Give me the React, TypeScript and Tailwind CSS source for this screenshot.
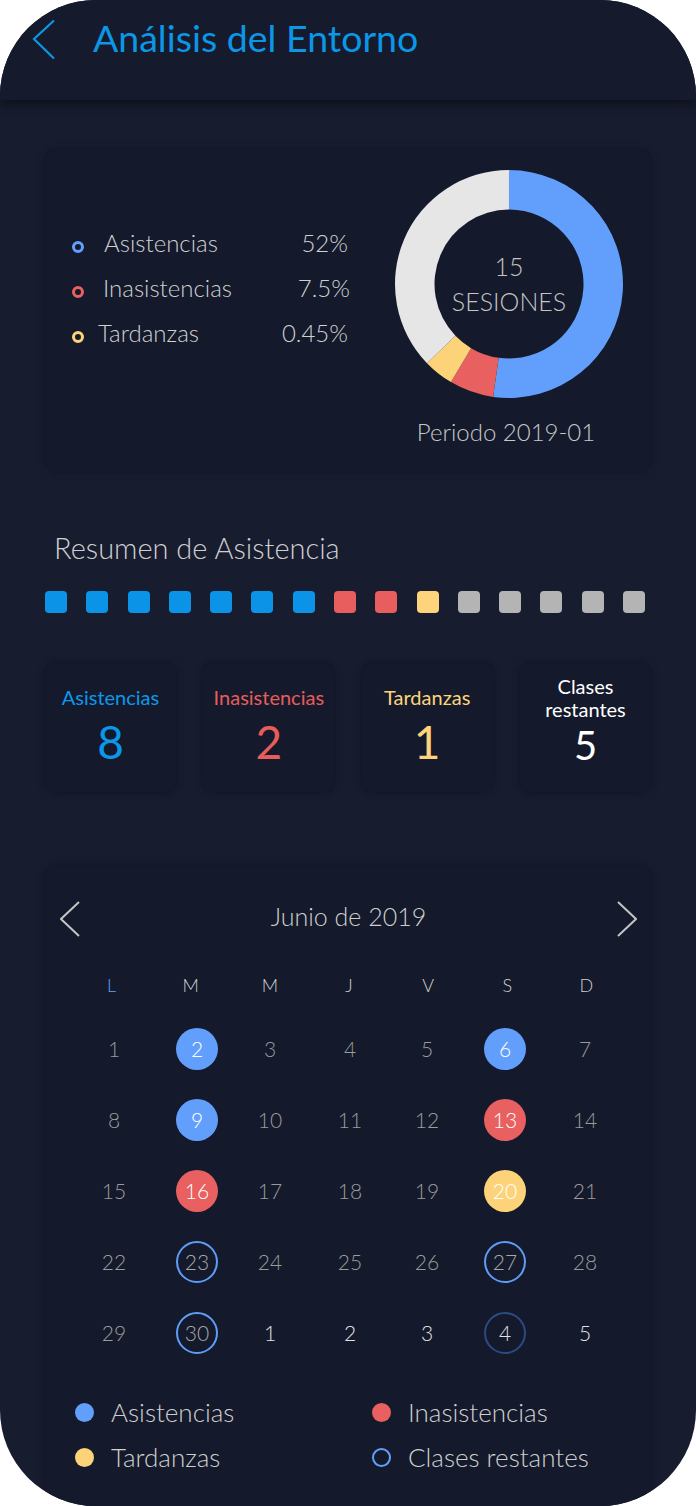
import React from "react";

const FONT = "font-['Lato','Liberation_Sans',sans-serif]";

function arc(cx: number, cy: number, ro: number, ri: number, a0: number, a1: number) {
  const rad = (a: number) => ((a - 90) * Math.PI) / 180;
  const p = (r: number, a: number) => [cx + r * Math.cos(rad(a)), cy + r * Math.sin(rad(a))];
  const large = a1 - a0 > 180 ? 1 : 0;
  const [x0, y0] = p(ro, a0);
  const [x1, y1] = p(ro, a1);
  const [x2, y2] = p(ri, a1);
  const [x3, y3] = p(ri, a0);
  return `M${x0} ${y0} A${ro} ${ro} 0 ${large} 1 ${x1} ${y1} L${x2} ${y2} A${ri} ${ri} 0 ${large} 0 ${x3} ${y3}Z`;
}

const segments = [
  { a0: 0, a1: 188, c: "#629ffc" },
  { a0: 188, a1: 210.6, c: "#e86060" },
  { a0: 210.6, a1: 226, c: "#fdd37a" },
  { a0: 226, a1: 359.99, c: "#e6e6e6" },
];

const squares = [
  "bg-[#0b93e8]", "bg-[#0b93e8]", "bg-[#0b93e8]", "bg-[#0b93e8]", "bg-[#0b93e8]", "bg-[#0b93e8]", "bg-[#0b93e8]",
  "bg-[#e85d5d]", "bg-[#e85d5d]", "bg-[#fdd47c]",
  "bg-[#b4b4b4]", "bg-[#b4b4b4]", "bg-[#b4b4b4]", "bg-[#b4b4b4]", "bg-[#b4b4b4]",
];

type Day = { n: number; k?: "blue" | "red" | "yellow" | "ring" | "dim"; next?: boolean };

const weeks: Day[][] = [
  [{ n: 1 }, { n: 2, k: "blue" }, { n: 3 }, { n: 4 }, { n: 5 }, { n: 6, k: "blue" }, { n: 7 }],
  [{ n: 8 }, { n: 9, k: "blue" }, { n: 10 }, { n: 11 }, { n: 12 }, { n: 13, k: "red" }, { n: 14 }],
  [{ n: 15 }, { n: 16, k: "red" }, { n: 17 }, { n: 18 }, { n: 19 }, { n: 20, k: "yellow" }, { n: 21 }],
  [{ n: 22 }, { n: 23, k: "ring" }, { n: 24 }, { n: 25 }, { n: 26 }, { n: 27, k: "ring" }, { n: 28 }],
  [
    { n: 29 },
    { n: 30, k: "ring" },
    { n: 1, next: true },
    { n: 2, next: true },
    { n: 3, next: true },
    { n: 4, k: "dim", next: true },
    { n: 5, next: true },
  ],
];

function DayCell({ d }: { d: Day }) {
  let cls = "text-[#9b9b9b]";
  if (d.next) cls = "text-[#e2e2e2]";
  if (d.k === "blue") cls = "bg-[#629ffc] text-white";
  if (d.k === "red") cls = "bg-[#e86060] text-white";
  if (d.k === "yellow") cls = "bg-[#fdd37a] text-white";
  if (d.k === "ring") cls = "border-2 border-[#5f9cf8] text-[#a8a8a8]";
  if (d.k === "dim") cls = "border-2 border-[#2c4a86] text-[#e2e2e2]";
  return (
    <div className="flex items-center justify-center h-[71px]">
      <div className={`w-[42px] h-[42px] shrink-0 rounded-full flex items-center justify-center text-[21px] font-light ${cls}`}>
        {d.n}
      </div>
    </div>
  );
}

function Chevron({ dir, color }: { dir: "l" | "r"; color: string }) {
  return (
    <svg width="20" height="36" viewBox="0 0 20 36" fill="none">
      {dir === "l" ? (
        <polyline points="19,1 1,18 19,35" stroke={color} strokeWidth="2" />
      ) : (
        <polyline points="1,1 19,18 1,35" stroke={color} strokeWidth="2" />
      )}
    </svg>
  );
}

const cardShadow = "shadow-[0_0_8px_rgba(0,0,0,0.3)]";

export default function App() {
  return (
    <div className={`w-[696px] h-[1506px] bg-white ${FONT}`}>
      <div className="w-[696px] h-[1506px] rounded-[96px] overflow-hidden bg-[#171c2f] flex flex-col">
        {/* Header */}
        <header className="h-[100px] shrink-0 bg-[#161a2d] shadow-[0_4px_10px_rgba(0,0,0,0.45)] relative z-10 flex items-start">
          <svg className="mt-[19px] ml-[32px]" width="24" height="42" viewBox="0 0 24 42" fill="none">
            <polyline points="22,1.5 2,20 22,39.5" stroke="#0b96e6" strokeWidth="2.2" />
          </svg>
          <h1 className="ml-[37px] mt-[15px] text-[37.5px] leading-[46px] text-[#0b96e6] font-normal">
            Análisis del Entorno
          </h1>
        </header>

        <main className="px-[45px] pt-[50px] flex flex-col">
          {/* Card 1 */}
          <section className={`h-[321px] rounded-[12px] bg-[#141a2b] ${cardShadow} flex`}>
            <div className="w-[303px] pl-[27px] pt-[70px] flex flex-col text-[24px] font-light text-[#d0d0d0]">
              <div className="h-[45px] leading-[45px] flex items-center">
                <span className="mt-[9px] w-[12px] h-[12px] rounded-full border-[3.5px] border-[#629ffc]" />
                <span className="ml-[20px]">Asistencias</span>
                <span className="ml-auto">52%</span>
              </div>
              <div className="h-[45px] leading-[45px] flex items-center">
                <span className="mt-[9px] w-[12px] h-[12px] rounded-full border-[3.5px] border-[#e86060]" />
                <span className="ml-[19px]">Inasistencias</span>
                <span className="ml-auto -mr-[2px]">7.5%</span>
              </div>
              <div className="h-[45px] leading-[45px] flex items-center">
                <span className="mt-[9px] w-[12px] h-[12px] rounded-full border-[3.5px] border-[#fdd37a]" />
                <span className="ml-[14px]">Tardanzas</span>
                <span className="ml-auto">0.45%</span>
              </div>
            </div>
            <div className="ml-auto mr-[27px] w-[230px] pt-[19px] flex flex-col items-center">
              <div className="relative w-[230px] h-[230px]">
                <svg width="230" height="230" viewBox="0 0 230 230">
                  {segments.map((s, i) => (
                    <path key={i} d={arc(115, 115, 114, 74.5, s.a0, s.a1)} fill={s.c} />
                  ))}
                </svg>
                <div className="absolute inset-0 flex flex-col items-center justify-center text-[25px] leading-[35px] font-light text-[#c4c4c4]">
                  <span>15</span>
                  <span>SESIONES</span>
                </div>
              </div>
              <div className="mt-[18px] -ml-[6px] text-[24px] leading-[30px] font-light text-[#c8c8c8]">
                Periodo 2019-01
              </div>
            </div>
          </section>

          {/* Resumen */}
          <h2 className="mt-[59px] pl-[9px] text-[29px] leading-[36px] font-light text-[#cfcfcf]">
            Resumen de Asistencia
          </h2>
          <div className="mt-[25px] pr-[6px] flex justify-between">
            {squares.map((c, i) => (
              <div key={i} className={`w-[22px] h-[22px] rounded-[4px] ${c}`} />
            ))}
          </div>

          {/* Stats */}
          <div className="mt-[50px] flex justify-between">
            <div className={`w-[131px] h-[129px] rounded-[12px] bg-[#141a2b] ${cardShadow} flex flex-col items-center pt-[22px]`}>
              <div className="text-[20px] leading-[24px] text-[#0b98ea]">Asistencias</div>
              <div className="mt-[10px] text-[46px] leading-[46px] text-[#0b98ea]">8</div>
            </div>
            <div className={`w-[131px] h-[129px] rounded-[12px] bg-[#141a2b] ${cardShadow} flex flex-col items-center pt-[22px]`}>
              <div className="text-[20px] leading-[24px] text-[#e85c5c]">Inasistencias</div>
              <div className="mt-[10px] text-[46px] leading-[46px] text-[#e85c5c]">2</div>
            </div>
            <div className={`w-[131px] h-[129px] rounded-[12px] bg-[#141a2b] ${cardShadow} flex flex-col items-center pt-[22px]`}>
              <div className="text-[20px] leading-[24px] text-[#fdd47b]">Tardanzas</div>
              <div className="mt-[10px] text-[46px] leading-[46px] text-[#fdd47b]">1</div>
            </div>
            <div className={`w-[131px] h-[129px] rounded-[12px] bg-[#141a2b] ${cardShadow} flex flex-col items-center pt-[12px]`}>
              <div className="text-[20px] leading-[23px] text-white text-center">
                Clases
                <br />
                restantes
              </div>
              <div className="mt-[4px] text-[40px] leading-[40px] text-white">5</div>
            </div>
          </div>

          {/* Calendar */}
          <section className={`mt-[74px] h-[700px] rounded-[12px] bg-[#141a2b] ${cardShadow} flex flex-col`}>
            <div className="mt-[35px] pl-[15px] pr-[14px] h-[36px] flex items-center justify-between">
              <Chevron dir="l" color="#c4c4c4" />
              <div className="mb-[7px] text-[25px] leading-[36px] text-[#cfcfcf] font-light">Junio de 2019</div>
              <Chevron dir="r" color="#c4c4c4" />
            </div>
            <div className="mt-[33px] pl-[27px] pr-[25px] grid grid-cols-7 h-[30px] items-center text-[18px] text-[#d0d0d0] font-light">
              <div className="text-center text-[#629ffc]">L</div>
              <div className="text-center">M</div>
              <div className="text-center">M</div>
              <div className="text-center">J</div>
              <div className="text-center">V</div>
              <div className="text-center">S</div>
              <div className="text-center">D</div>
            </div>
            <div className="mt-[13px] pl-[29px] grid grid-cols-[80px_86px_60px_100px_54px_102px_58px]">
              {weeks.flat().map((d, i) => (
                <DayCell key={i} d={d} />
              ))}
            </div>
            <div className="mt-[22px] pl-[30px] grid grid-cols-[297px_1fr] text-[26px] font-light text-[#cfcfcf]">
              <div className="h-[45px] flex items-center">
                <span className="w-[19px] h-[19px] rounded-full bg-[#629ffc]" />
                <span className="ml-[17px]">Asistencias</span>
              </div>
              <div className="h-[45px] flex items-center">
                <span className="w-[19px] h-[19px] rounded-full bg-[#e86060]" />
                <span className="ml-[17px]">Inasistencias</span>
              </div>
              <div className="h-[45px] flex items-center">
                <span className="w-[19px] h-[19px] rounded-full bg-[#fdd37a]" />
                <span className="ml-[17px]">Tardanzas</span>
              </div>
              <div className="h-[45px] flex items-center">
                <span className="w-[19px] h-[19px] rounded-full border-2 border-[#629ffc]" />
                <span className="ml-[17px]">Clases restantes</span>
              </div>
            </div>
          </section>
        </main>
      </div>
    </div>
  );
}
